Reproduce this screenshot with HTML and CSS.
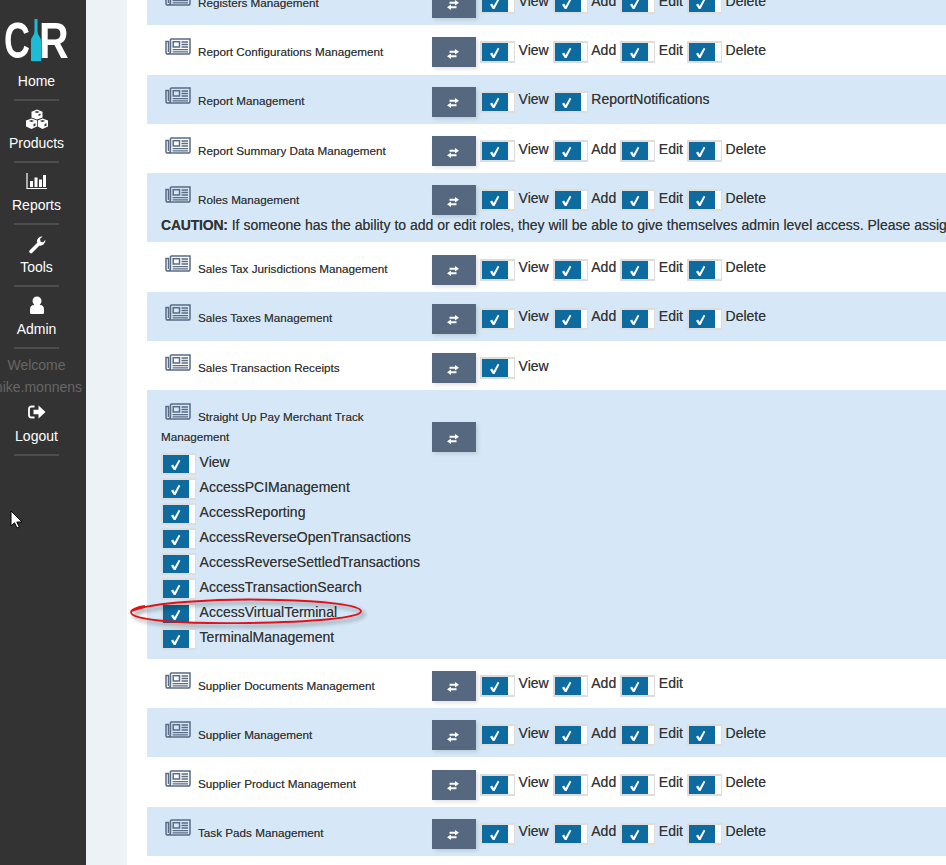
FILE: index.html
```html
<!DOCTYPE html>
<html lang="en">
<head>
<meta charset="utf-8">
<title>Roles Management</title>
<link rel="stylesheet" href="styles.css">
</head>
<body>
<svg class="defs" width="0" height="0" aria-hidden="true">
  <symbol id="news" viewBox="0 0 26 17">
    <path d="M5.500 1h19.500v13.200a1.800 1.800 0 0 1-1.800 1.800H2.800A1.800 1.800 0 0 1 1 14.200V3.500h2.500v10.500M5.500 1v12.500a2.500 2.500 0 0 1-2.500 2.500" fill="none" stroke="#5a6b85" stroke-width="1.500"/>
    <rect x="8.200" y="3.700" width="6.300" height="5.300" fill="none" stroke="#5a6b85" stroke-width="1.500"/>
    <path d="M16.500 4h6.500M16.500 6.500h6.500M16.500 9h6.500M7.600 11.600h15.400M7.600 13.800h15.400" stroke="#5a6b85" stroke-width="1.300"/>
  </symbol>
  <symbol id="swap" viewBox="0 0 12 10">
    <path d="M2.500 1.800h5.500V0l4 2.800-4 2.700V3.800H2.500zM9.500 6.200H4V4.500L0 7.200 4 10V8.200h5.500z" fill="#fff"/>
  </symbol>
  <symbol id="tick" viewBox="0 0 11 12">
    <path d="M1 6.800l2.100-1.300 1.500 2.500L8.800 .8l1.500 .9-4.800 9.300H3.800z" fill="#fff"/>
  </symbol>
</svg>

<aside class="sidebar">
  <div class="logo">
    <span class="logo-c">C</span>
    <svg class="bottle" width="10" height="42" viewBox="0 0 10 42"><path d="M3.500 0h3v12q0 2.500 1.700 5T10 22v20H0V22q0-2.500 1.800-5t1.700-5z" fill="#1cbcd6"/></svg>
    <span class="logo-r">R</span>
  </div>
  <a class="nav-item"><span class="nav-label">Home</span></a>
  <a class="nav-item">
    <svg class="nav-icon" width="24" height="22" viewBox="0 0 24 22"><path d="M12 1.500l5.500 2.200V9.500L12 11.500 6.500 9.500V3.700zM6.500 10.500L12 12.500v6l-5.500 2.500L1 18.500v-6zM17.500 10.500l5.500 2v6L17.500 21 12.800 18.500v-6z" fill="#fff"/><path d="M9.300 4L12 2.900 14.700 4 12 5.100zM3.800 12.900l2.700-1 2.700 1-2.700 1.100zM14.800 12.900l2.700-1 2.700 1-2.700 1.100zM8.500 16l2-.8v2.500l-2 .9zM19.500 16l2-.8v2.500l-2 .9zM13.500 8l2-.8V5.500l-2 .8z" fill="#333"/></svg>
    <span class="nav-label">Products</span>
  </a>
  <a class="nav-item">
    <svg class="nav-icon" width="22" height="22" viewBox="0 0 22 22"><path d="M1 3v15.500h20" fill="none" stroke="#fff" stroke-width="1.200"/><path d="M4 11h3v6H4zM8.500 7.500h3V17h-3zM13 9.500h3V17h-3zM17 5h3v12h-3z" fill="#fff"/></svg>
    <span class="nav-label">Reports</span>
  </a>
  <a class="nav-item">
    <svg class="nav-icon" width="22" height="22" viewBox="0 0 22 22"><g transform="translate(2.500 3) scale(.85)"><path d="M3 19.500L11.500 11" stroke="#fff" stroke-width="4.200" stroke-linecap="round"/><path d="M19.800 5.500a6 6 0 0 1-8.300 6.500L9.800 7.500a6 6 0 0 1 6.700-5.700l-3 3 .8 3 3 .8z" fill="#fff"/></g></svg>
    <span class="nav-label">Tools</span>
  </a>
  <a class="nav-item nav-admin">
    <svg class="nav-icon" width="22" height="22" viewBox="0 0 22 22"><circle cx="11" cy="7" r="4.500" fill="#fff"/><path d="M4 18.500v-3q0-4.500 4-4.500h6q4 0 4 4.500v3q0 1.500-1.500 1.500h-11Q4 20 4 18.500z" fill="#fff"/></svg>
    <span class="nav-label">Admin</span>
  </a>
  <div class="welcome">Welcome</div>
  <div class="username">mike.monnens</div>
  <a class="nav-item">
    <svg class="nav-icon" width="22" height="22" viewBox="0 0 22 22"><path d="M8.500 5.500H5.500A2.500 2.500 0 0 0 3 8v6a2.500 2.500 0 0 0 2.500 2.500h3" fill="none" stroke="#fff" stroke-width="1.800"/><path d="M7.500 8.800h5V4.500l7 6.500-7 6.500v-4.300h-5z" fill="#fff"/></svg>
    <span class="nav-label">Logout</span>
  </a>
</aside>

<div class="gutter"></div>

<main class="main">
  <section class="list">

    <div class="row row-blue">
      <div class="head">
        <div class="name"><svg class="news" width="26" height="17"><use href="#news"/></svg><span class="label">Registers Management</span></div>
        <span class="swap"><svg width="12" height="10"><use href="#swap"/></svg></span>
        <div class="perms">
          <span class="perm"><span class="check"><span class="fill"><svg width="11" height="12"><use href="#tick"/></svg></span></span><span class="perm-text">View</span></span>
          <span class="perm"><span class="check"><span class="fill"><svg width="11" height="12"><use href="#tick"/></svg></span></span><span class="perm-text">Add</span></span>
          <span class="perm"><span class="check"><span class="fill"><svg width="11" height="12"><use href="#tick"/></svg></span></span><span class="perm-text">Edit</span></span>
          <span class="perm"><span class="check"><span class="fill"><svg width="11" height="12"><use href="#tick"/></svg></span></span><span class="perm-text">Delete</span></span>
        </div>
      </div>
    </div>

    <div class="row">
      <div class="head">
        <div class="name"><svg class="news" width="26" height="17"><use href="#news"/></svg><span class="label">Report Configurations Management</span></div>
        <span class="swap"><svg width="12" height="10"><use href="#swap"/></svg></span>
        <div class="perms">
          <span class="perm"><span class="check"><span class="fill"><svg width="11" height="12"><use href="#tick"/></svg></span></span><span class="perm-text">View</span></span>
          <span class="perm"><span class="check"><span class="fill"><svg width="11" height="12"><use href="#tick"/></svg></span></span><span class="perm-text">Add</span></span>
          <span class="perm"><span class="check"><span class="fill"><svg width="11" height="12"><use href="#tick"/></svg></span></span><span class="perm-text">Edit</span></span>
          <span class="perm"><span class="check"><span class="fill"><svg width="11" height="12"><use href="#tick"/></svg></span></span><span class="perm-text">Delete</span></span>
        </div>
      </div>
    </div>

    <div class="row row-blue">
      <div class="head">
        <div class="name"><svg class="news" width="26" height="17"><use href="#news"/></svg><span class="label">Report Management</span></div>
        <span class="swap"><svg width="12" height="10"><use href="#swap"/></svg></span>
        <div class="perms">
          <span class="perm"><span class="check"><span class="fill"><svg width="11" height="12"><use href="#tick"/></svg></span></span><span class="perm-text">View</span></span>
          <span class="perm"><span class="check"><span class="fill"><svg width="11" height="12"><use href="#tick"/></svg></span></span><span class="perm-text">ReportNotifications</span></span>
        </div>
      </div>
    </div>

    <div class="row">
      <div class="head">
        <div class="name"><svg class="news" width="26" height="17"><use href="#news"/></svg><span class="label">Report Summary Data Management</span></div>
        <span class="swap"><svg width="12" height="10"><use href="#swap"/></svg></span>
        <div class="perms">
          <span class="perm"><span class="check"><span class="fill"><svg width="11" height="12"><use href="#tick"/></svg></span></span><span class="perm-text">View</span></span>
          <span class="perm"><span class="check"><span class="fill"><svg width="11" height="12"><use href="#tick"/></svg></span></span><span class="perm-text">Add</span></span>
          <span class="perm"><span class="check"><span class="fill"><svg width="11" height="12"><use href="#tick"/></svg></span></span><span class="perm-text">Edit</span></span>
          <span class="perm"><span class="check"><span class="fill"><svg width="11" height="12"><use href="#tick"/></svg></span></span><span class="perm-text">Delete</span></span>
        </div>
      </div>
    </div>

    <div class="row row-blue">
      <div class="head">
        <div class="name"><svg class="news" width="26" height="17"><use href="#news"/></svg><span class="label">Roles Management</span></div>
        <span class="swap"><svg width="12" height="10"><use href="#swap"/></svg></span>
        <div class="perms">
          <span class="perm"><span class="check"><span class="fill"><svg width="11" height="12"><use href="#tick"/></svg></span></span><span class="perm-text">View</span></span>
          <span class="perm"><span class="check"><span class="fill"><svg width="11" height="12"><use href="#tick"/></svg></span></span><span class="perm-text">Add</span></span>
          <span class="perm"><span class="check"><span class="fill"><svg width="11" height="12"><use href="#tick"/></svg></span></span><span class="perm-text">Edit</span></span>
          <span class="perm"><span class="check"><span class="fill"><svg width="11" height="12"><use href="#tick"/></svg></span></span><span class="perm-text">Delete</span></span>
        </div>
      </div>
      <p class="caution"><strong>CAUTION:</strong> If someone has the ability to add or edit roles, they will be able to give themselves admin level access. Please assign this permission carefully.</p>
    </div>

    <div class="row">
      <div class="head">
        <div class="name"><svg class="news" width="26" height="17"><use href="#news"/></svg><span class="label">Sales Tax Jurisdictions Management</span></div>
        <span class="swap"><svg width="12" height="10"><use href="#swap"/></svg></span>
        <div class="perms">
          <span class="perm"><span class="check"><span class="fill"><svg width="11" height="12"><use href="#tick"/></svg></span></span><span class="perm-text">View</span></span>
          <span class="perm"><span class="check"><span class="fill"><svg width="11" height="12"><use href="#tick"/></svg></span></span><span class="perm-text">Add</span></span>
          <span class="perm"><span class="check"><span class="fill"><svg width="11" height="12"><use href="#tick"/></svg></span></span><span class="perm-text">Edit</span></span>
          <span class="perm"><span class="check"><span class="fill"><svg width="11" height="12"><use href="#tick"/></svg></span></span><span class="perm-text">Delete</span></span>
        </div>
      </div>
    </div>

    <div class="row row-blue">
      <div class="head">
        <div class="name"><svg class="news" width="26" height="17"><use href="#news"/></svg><span class="label">Sales Taxes Management</span></div>
        <span class="swap"><svg width="12" height="10"><use href="#swap"/></svg></span>
        <div class="perms">
          <span class="perm"><span class="check"><span class="fill"><svg width="11" height="12"><use href="#tick"/></svg></span></span><span class="perm-text">View</span></span>
          <span class="perm"><span class="check"><span class="fill"><svg width="11" height="12"><use href="#tick"/></svg></span></span><span class="perm-text">Add</span></span>
          <span class="perm"><span class="check"><span class="fill"><svg width="11" height="12"><use href="#tick"/></svg></span></span><span class="perm-text">Edit</span></span>
          <span class="perm"><span class="check"><span class="fill"><svg width="11" height="12"><use href="#tick"/></svg></span></span><span class="perm-text">Delete</span></span>
        </div>
      </div>
    </div>

    <div class="row">
      <div class="head">
        <div class="name"><svg class="news" width="26" height="17"><use href="#news"/></svg><span class="label">Sales Transaction Receipts</span></div>
        <span class="swap"><svg width="12" height="10"><use href="#swap"/></svg></span>
        <div class="perms">
          <span class="perm"><span class="check"><span class="fill"><svg width="11" height="12"><use href="#tick"/></svg></span></span><span class="perm-text">View</span></span>
        </div>
      </div>
    </div>

    <div class="row row-blue row-stacked">
      <div class="head">
        <div class="name"><svg class="news" width="26" height="17"><use href="#news"/></svg><span class="label">Straight Up Pay Merchant Track Management</span></div>
        <span class="swap"><svg width="12" height="10"><use href="#swap"/></svg></span>
      </div>
      <div class="perm-stack">
        <span class="perm"><span class="check"><span class="fill"><svg width="11" height="12"><use href="#tick"/></svg></span></span><span class="perm-text">View</span></span>
        <span class="perm"><span class="check"><span class="fill"><svg width="11" height="12"><use href="#tick"/></svg></span></span><span class="perm-text">AccessPCIManagement</span></span>
        <span class="perm"><span class="check"><span class="fill"><svg width="11" height="12"><use href="#tick"/></svg></span></span><span class="perm-text">AccessReporting</span></span>
        <span class="perm"><span class="check"><span class="fill"><svg width="11" height="12"><use href="#tick"/></svg></span></span><span class="perm-text">AccessReverseOpenTransactions</span></span>
        <span class="perm"><span class="check"><span class="fill"><svg width="11" height="12"><use href="#tick"/></svg></span></span><span class="perm-text">AccessReverseSettledTransactions</span></span>
        <span class="perm"><span class="check"><span class="fill"><svg width="11" height="12"><use href="#tick"/></svg></span></span><span class="perm-text">AccessTransactionSearch</span></span>
        <span class="perm"><span class="check"><span class="fill"><svg width="11" height="12"><use href="#tick"/></svg></span></span><span class="perm-text">AccessVirtualTerminal</span></span>
        <span class="perm"><span class="check"><span class="fill"><svg width="11" height="12"><use href="#tick"/></svg></span></span><span class="perm-text">TerminalManagement</span></span>
      </div>
    </div>

    <div class="row">
      <div class="head">
        <div class="name"><svg class="news" width="26" height="17"><use href="#news"/></svg><span class="label">Supplier Documents Management</span></div>
        <span class="swap"><svg width="12" height="10"><use href="#swap"/></svg></span>
        <div class="perms">
          <span class="perm"><span class="check"><span class="fill"><svg width="11" height="12"><use href="#tick"/></svg></span></span><span class="perm-text">View</span></span>
          <span class="perm"><span class="check"><span class="fill"><svg width="11" height="12"><use href="#tick"/></svg></span></span><span class="perm-text">Add</span></span>
          <span class="perm"><span class="check"><span class="fill"><svg width="11" height="12"><use href="#tick"/></svg></span></span><span class="perm-text">Edit</span></span>
        </div>
      </div>
    </div>

    <div class="row row-blue">
      <div class="head">
        <div class="name"><svg class="news" width="26" height="17"><use href="#news"/></svg><span class="label">Supplier Management</span></div>
        <span class="swap"><svg width="12" height="10"><use href="#swap"/></svg></span>
        <div class="perms">
          <span class="perm"><span class="check"><span class="fill"><svg width="11" height="12"><use href="#tick"/></svg></span></span><span class="perm-text">View</span></span>
          <span class="perm"><span class="check"><span class="fill"><svg width="11" height="12"><use href="#tick"/></svg></span></span><span class="perm-text">Add</span></span>
          <span class="perm"><span class="check"><span class="fill"><svg width="11" height="12"><use href="#tick"/></svg></span></span><span class="perm-text">Edit</span></span>
          <span class="perm"><span class="check"><span class="fill"><svg width="11" height="12"><use href="#tick"/></svg></span></span><span class="perm-text">Delete</span></span>
        </div>
      </div>
    </div>

    <div class="row">
      <div class="head">
        <div class="name"><svg class="news" width="26" height="17"><use href="#news"/></svg><span class="label">Supplier Product Management</span></div>
        <span class="swap"><svg width="12" height="10"><use href="#swap"/></svg></span>
        <div class="perms">
          <span class="perm"><span class="check"><span class="fill"><svg width="11" height="12"><use href="#tick"/></svg></span></span><span class="perm-text">View</span></span>
          <span class="perm"><span class="check"><span class="fill"><svg width="11" height="12"><use href="#tick"/></svg></span></span><span class="perm-text">Add</span></span>
          <span class="perm"><span class="check"><span class="fill"><svg width="11" height="12"><use href="#tick"/></svg></span></span><span class="perm-text">Edit</span></span>
          <span class="perm"><span class="check"><span class="fill"><svg width="11" height="12"><use href="#tick"/></svg></span></span><span class="perm-text">Delete</span></span>
        </div>
      </div>
    </div>

    <div class="row row-blue">
      <div class="head">
        <div class="name"><svg class="news" width="26" height="17"><use href="#news"/></svg><span class="label">Task Pads Management</span></div>
        <span class="swap"><svg width="12" height="10"><use href="#swap"/></svg></span>
        <div class="perms">
          <span class="perm"><span class="check"><span class="fill"><svg width="11" height="12"><use href="#tick"/></svg></span></span><span class="perm-text">View</span></span>
          <span class="perm"><span class="check"><span class="fill"><svg width="11" height="12"><use href="#tick"/></svg></span></span><span class="perm-text">Add</span></span>
          <span class="perm"><span class="check"><span class="fill"><svg width="11" height="12"><use href="#tick"/></svg></span></span><span class="perm-text">Edit</span></span>
          <span class="perm"><span class="check"><span class="fill"><svg width="11" height="12"><use href="#tick"/></svg></span></span><span class="perm-text">Delete</span></span>
        </div>
      </div>
    </div>

  </section>
</main>

<svg class="oval" width="240" height="32" viewBox="0 0 240 32"><path d="M4 14C20 6 90 1 150 3c45 1 82 5 83 11 1 7-50 11-112 12C60 27 2 24 3 15c0-2 6-5 14-6" fill="none" stroke="#e3101a" stroke-width="1.800"/></svg>
<svg class="cursor" width="13" height="19" viewBox="0 0 13 19"><path d="M1 1v15l3.500-3.200 2.500 5.200 2.300-1-2.500-5H12z" fill="#fff" stroke="#000" stroke-width="1"/></svg>
</body>
</html>
```
FILE: styles.css
```css
* { box-sizing: border-box; }

html, body {
  margin: 0;
  height: 865px;
  overflow: hidden;
}

body {
  display: flex;
  position: relative;
  font-family: "Liberation Sans", Arial, sans-serif;
  color: #333;
  background: #fff;
}

.defs { position: absolute; }

/* Sidebar */
.sidebar {
  flex: 0 0 86px;
  width: 86px;
  padding-right: 13px;
  background: #333;
  color: #fff;
  overflow: hidden;
  display: flex;
  flex-direction: column;
  align-items: center;
}

.logo {
  position: relative;
  flex: 0 0 71px;
  width: 73px;
  color: #fff;
  font-weight: 700;
  font-size: 50px;
  line-height: 36px;
}

.logo-c, .logo-r {
  position: absolute;
  bottom: 12px;
  transform-origin: left bottom;
}

.logo-c { left: 4px; transform: scaleX(.72); }
.logo-r { left: 39px; transform: scaleX(.82); }
.bottle { position: absolute; left: 31px; top: 19px; }

.nav-item {
  display: flex;
  flex-direction: column;
  align-items: center;
  width: 73px;
  padding-bottom: 10px;
  margin-bottom: 7px;
  position: relative;
}

.nav-item::after {
  content: "";
  position: absolute;
  left: 14px;
  bottom: 0;
  width: 45px;
  height: 2px;
  background: #4d4d4d;
}

.nav-admin { margin-bottom: 6px; }

.nav-icon { display: block; margin-bottom: 3px; }

.nav-label {
  font-size: 14px;
  line-height: 20px;
  white-space: nowrap;
}

.welcome, .username {
  width: 73px;
  display: flex;
  justify-content: center;
  white-space: nowrap;
  font-size: 14px;
  line-height: 20px;
  color: #666;
}

.username { margin-top: 2px; margin-bottom: 4px; }

/* Gutter */
.gutter {
  flex: 0 0 41px;
  background: #edf2f6;
}

/* Main list */
.main {
  flex: 1 1 0;
  min-width: 0;
  padding-left: 20px;
  overflow: hidden;
  text-shadow: 0 0 .5px rgba(40, 40, 40, .6);
}

.list {
  margin-top: -24px;
  width: 799px;
}

.row {
  padding: 12.2px 0 7.1px 14px;
  background: #fff;
}

.row-blue { background: #d6e8f7; }
.row-stacked { padding-bottom: 9.05px; }

.head {
  display: flex;
  align-items: flex-end;
}

.name {
  flex: 0 0 271px;
  width: 271px;
  min-height: 30px;
  padding: .6px 14px 5px 0;
  font-size: 11.7px;
  line-height: 20px;
}

.news {
  display: inline-block;
  vertical-align: 1px;
  margin-left: 4px;
  margin-right: 7px;
}

.swap {
  flex: 0 0 44px;
  width: 44px;
  height: 30px;
  margin-right: 4px;
  padding: 3px 3px 0 0;
  display: flex;
  align-items: center;
  justify-content: center;
  background: #566780;
  box-shadow: 2px 2px 4px rgba(0, 0, 0, .12);
}

.swap svg { display: block; }

.perms {
  display: flex;
  align-self: flex-end;
  height: 30px;
  padding-top: 4px;
  white-space: nowrap;
}

.perm {
  display: flex;
  align-items: flex-start;
  margin-right: 4px;
}

.check {
  flex: 0 0 35px;
  width: 35px;
  height: 22px;
  border: 2px solid #ddd;
  border-right-width: 1px;
  background: #fff;
  padding-right: 6px;
  margin-right: 3.6px;
}

.fill {
  display: flex;
  align-items: center;
  justify-content: center;
  height: 100%;
  background: #0e6b9f;
}

.fill svg { display: block; margin: 2px 2px 0 0; }

.perm-text {
  padding-top: .5px;
  font-size: 14px;
  line-height: 16px;
}

.perm-stack {
  display: flex;
  flex-direction: column;
  gap: 3px;
  margin-top: .7px;
}

.perm-stack .perm-text { padding-top: 1px; }

.caution {
  margin: 0;
  font-size: 14px;
  line-height: 20px;
  white-space: nowrap;
}

.caution strong { letter-spacing: -.2px; }

/* Annotation overlays */
.oval {
  position: absolute;
  left: 128px;
  top: 597px;
  filter: drop-shadow(3px 3px 2px rgba(0, 0, 0, .45));
}

.cursor {
  position: absolute;
  left: 10px;
  top: 510px;
}
```
